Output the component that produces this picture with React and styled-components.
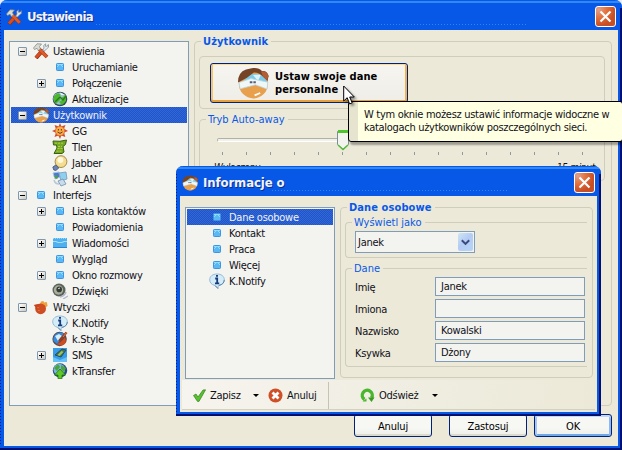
import React from 'react';
import styled, { createGlobalStyle, css } from 'styled-components';

const Global = createGlobalStyle`
  *, *::before, *::after { box-sizing: border-box; }
  body { margin: 0; overflow: hidden; font: 11px/16px "DejaVu Sans Condensed", "DejaVu Sans", sans-serif; letter-spacing: -0.27px; color: #101018; }
  svg { display: block; flex: none; }
`;

const line = '#cfcebd';
const steel = '#7f9db9';
const royal = '#0858e8';
const face = '#ece9d8';

const Desktop = styled.main`
  position: relative;
  width: 622px;
  height: 450px;
  overflow: hidden;
  background: #e8edf8;
`;

const Window = styled.section`
  display: flex;
  flex-direction: column;
  width: 622px;
  height: 450px;
  border: solid ${royal};
  border-width: 0 4px 4px;
  border-radius: 7px 7px 0 0;
  background: ${face};
  position: relative;
  &::after {
    content: '';
    position: absolute;
    inset: 8px -4px -4px -4px;
    border: solid #001070;
    border-width: 0 2px 2px 0;
    pointer-events: none;
  }
  &::before {
    content: '';
    position: absolute;
    inset: 8px auto 0 -4px;
    width: 1px;
    background: repeating-linear-gradient(#001c86 0 1px, transparent 1px 3px);
    z-index: 1;
  }
`;

const Dialog = styled(Window)`
  position: absolute;
  left: 176px;
  top: 166px;
  width: 425px;
  height: 250px;
`;

const TitleBar = styled.header`
  display: flex;
  align-items: center;
  height: 30px;
  margin: 0 -4px;
  padding: 3px 6px 0 6px;
  flex: none;
  background:
    repeating-linear-gradient(90deg, #2f82f8 0 1px, transparent 1px 3px) 96px 24px / calc(100% - 190px) 1px no-repeat,
    linear-gradient(#0858e8 0 1px, #2f8af8 1px 3px, #0858e8 3px);
  border-radius: 7px 7px 0 0;
`;

const Title = styled.h1`
  flex: 1;
  margin: 0 0 0 5px;
  font-size: 13px;
  line-height: 18px;
  letter-spacing: ${(p) => p.$track || '-0.7px'};
  color: #f2f4fb;
  text-shadow: 1px 1px #0a2f95;
`;

const CloseButton = styled.button`
  display: grid;
  place-items: center;
  width: 21px;
  height: 21px;
  padding: 0;
  border: 1px solid #fff;
  border-radius: 3px;
  background: radial-gradient(circle at 15% 15%, #e0a08c, #e2703c 35%, #c84e24 70%);
`;

const Content = styled.div`
  display: flex;
  gap: 5px;
  padding: 11px 6px 0 5px;
  height: 376px;
`;

const Tree = styled.ul`
  list-style: none;
  margin: 0;
  padding: 1px;
  width: 180px;
  height: 365px;
  flex: none;
  border: 1px solid ${steel};
  background: #f3f3ef;
`;

const DialogTree = styled(Tree)`
  width: 150px;
  height: 172px;
`;

const TreeRow = styled.li`
  display: flex;
  align-items: center;
  height: 16px;
  padding-left: ${(p) => p.$indent}px;
  ${(p) => p.$selected && css`
    color: #f2f2f2;
    background: repeating-conic-gradient(#1556dc 0 25%, #3c66c4 0 50%) 0 0 / 2px 2px;
  `}
`;

const RowLabel = styled.span`
  padding-top: 2px;
`;

const Toggle = styled.span`
  display: grid;
  width: 9px;
  height: 9px;
  margin-right: 6px;
  flex: none;
  border: 1px solid #7f98af;
  border-radius: 1px;
  background:
    linear-gradient(#000, #000) center / 5px 1px no-repeat,
    ${(p) => !p.$open && 'linear-gradient(#000, #000) center / 1px 5px no-repeat,'}
    linear-gradient(135deg, #fff, #cfc9bc);
  visibility: ${(p) => (p.$hidden ? 'hidden' : 'visible')};
`;

const RowIcon = styled.span`
  display: flex;
  width: 16px;
  height: 16px;
  margin-right: 4px;
  flex: none;
`;

const GroupBox = styled.section`
  border: 1px solid ${line};
  border-radius: 4px;
  height: ${(p) => p.$h}px;
  padding: ${(p) => p.$pad || '0'};
  margin-top: ${(p) => p.$mt || 0}px;
  flex: ${(p) => (p.$grow ? '1' : 'none')};
  ${(p) => p.$open && css`
    border-right: 0;
    border-radius: 4px 0 0 4px;
  `}
`;

const Legend = styled.h2`
  width: fit-content;
  height: 16px;
  margin: -8px 0 -1px ${(p) => p.$x || 6}px;
  padding: 0 3px 0 2px;
  font-size: 11px;
  line-height: 16px;
  font-weight: ${(p) => (p.$bold ? 700 : 400)};
  letter-spacing: ${(p) => (p.$bold ? '0.1px' : '0')};
  color: ${royal};
  background: ${face};
`;

const PersonalButton = styled.button`
  display: flex;
  align-items: center;
  gap: 6px;
  width: 198px;
  height: 40px;
  padding: 0 0 0 26px;
  border: 1px solid #00237a;
  border-radius: 3px;
  background: linear-gradient(#f6f5f1, #efede6);
  box-shadow: inset 0 1px #fbdc98, inset 0 -2px #e8a038, inset 2px 0 #f7c56c, inset -2px 0 #f0b350;
  font: 700 11px/13px "DejaVu Sans Condensed", sans-serif;
  letter-spacing: 0.1px;
  text-align: left;
`;

const Track = styled.div`
  display: flex;
  align-items: center;
  height: 4px;
  margin: 11px 9px 0 17px;
  border: 1px solid #aeb3a8;
  border-bottom-color: #fff;
  border-radius: 2px;
  background: #f3f1e7;
`;

const Thumb = styled.span`
  margin-left: 119px;
`;

const Ticks = styled.div`
  display: flex;
  justify-content: space-between;
  width: 361px;
  margin: 10px 0 0 22px;
`;

const Tick = styled.i`
  width: 1px;
  height: 3px;
  background: #8c9c9c;
`;

const RangeLabels = styled.div`
  display: flex;
  justify-content: space-between;
  margin: 5px 9px 0 14px;
  font-size: 10px;
  font-style: italic;
`;

const Actions = styled.footer`
  display: flex;
  justify-content: flex-end;
  padding: 8px 6px 0 0;
`;

const ActionButton = styled.button`
  width: 78px;
  height: 23px;
  padding: 2px 0 0;
  margin-left: ${(p) => p.$gap}px;
  border: 1px solid #00237a;
  border-radius: 3px;
  background: linear-gradient(#f7f7f4 60%, #eeeee8);
  box-shadow: ${(p) => (p.$primary ? 'inset 0 2px #c4d6f6, inset 2px 0 #a9c6f2, inset -2px 0 #8fb8ee, inset 0 -2px #6fa8ea' : 'inset 0 -2px #dcdace')};
  font: inherit;
  letter-spacing: -0.15px;
`;

const DialogBody = styled.div`
  display: flex;
  gap: 5px;
  padding: 11px 4px 0 5px;
  height: 184px;
`;

const SelectBox = styled.div`
  display: flex;
  align-items: center;
  justify-content: space-between;
  width: 120px;
  height: 22px;
  margin: 1px 0 0 9px;
  padding: 0 1px 0 2px;
  border: 1px solid ${steel};
  background: #f3f3ef;
`;

const SelectArrow = styled.span`
  display: grid;
  place-items: center;
  width: 15px;
  height: 18px;
  border-radius: 2px;
  background: linear-gradient(135deg, #cfe6f4, #b4ccf4 45%, #b4d4fa);
`;

const Fields = styled.div`
  display: grid;
  grid-template-columns: 80px 150px;
  gap: 3px 0;
  align-items: center;
  margin: 1px 0 0 9px;
`;

const Field = styled.output`
  height: 19px;
  padding: 1px 5px;
  border: 1px solid ${steel};
  background: #f3f3ef;
`;

const ToolBar = styled.nav`
  display: flex;
  align-items: center;
  height: 30px;
  margin: 0 2px;
  padding: 0 11px;
  background: linear-gradient(105deg, #f6f4ee, #efede0 60%, #ece9d8);
  box-shadow: inset 0 -1px #d4d1c2;
`;

const Tool = styled.span`
  display: flex;
  align-items: center;
  gap: 4px;
  width: ${(p) => p.$w}px;
`;

const Caret = styled.i`
  width: 0;
  height: 0;
  border: solid transparent;
  border-width: 3px 3px 0;
  border-top-color: #000;
`;

const Divider = styled.i`
  width: 1px;
  height: 27px;
  margin-right: 31px;
  background: #c5c3b4;
`;

const Tooltip = styled.aside`
  position: absolute;
  left: 348px;
  top: 101px;
  width: 275px;
  height: 41px;
  padding: 6px 0 0 15px;
  border: 1px solid #000;
  border-radius: 3px;
  background: linear-gradient(90deg, #e6e3cf 9px, #ffffe1 9px);
  box-shadow: 2px 3px 2px #0005;
  line-height: 13px;
  letter-spacing: -0.3px;
  white-space: nowrap;
`;

const Pointer = styled.svg`
  position: absolute;
  left: 343px;
  top: 85px;
  filter: drop-shadow(2px 2px 1px #0006);
`;

const Svg = ({ s = 16, children }) => (
  <svg width={s} height={s} viewBox="0 0 16 16">{children}</svg>
);

const ToolsIcon = () => (
  <Svg>
    <path d="M3 15 10 7" stroke="#8e2c0c" strokeWidth="4" />
    <path d="M3 14.5 10 7" stroke="#d84e20" strokeWidth="3" />
    <path d="M6 6 14 14" stroke="#9c330f" strokeWidth="3.8" />
    <path d="M6.5 6.5 13.7 13.7" stroke="#e25a28" strokeWidth="2.8" />
    <path d="M.5 5 4 .8 8.5 1 6.5 3.5 7.5 6 5.5 7.5 4 5.3 1.5 6.5z" fill="#d9dcd4" stroke="#7d8378" strokeWidth=".7" />
    <path d="M9.5 7.5 11 5 10.7 2.5 12.6.8 12.5 3.3 14.6 3 15.3 1.5 15.6 4.2 13.6 5.8 11.5 8z" fill="#e4ebee" stroke="#75828c" strokeWidth=".7" />
  </Svg>
);
const BoxIcon = () => (
  <Svg>
    <rect x="4.5" y="4.5" width="7" height="7" rx=".8" fill="#5cb8f4" stroke="#3c94e4" />
    <path d="M5 5.5h6M5 7.5h1m4 0h1M6 6.5h1m2 0h1" stroke="#8cdcfc" />
  </Svg>
);
const GlobeIcon = () => (
  <Svg>
    <circle cx="8" cy="8" r="7.3" fill="#2c4a54" />
    <circle cx="7.6" cy="7.6" r="6.2" fill="#9cc4d4" />
    <path d="M2 5 6 2 9 4 7 6 9 8 6 11 4 13 1.5 9zM9 7 14 4v6l-4 4-3-3 3-2z" fill="#4cb82c" />
    <path d="M3 11 8 6l3 3 3-4" fill="none" stroke="#2a7c18" strokeWidth="1.3" />
    <path d="M8 1.5 13 4 9 4z" fill="#e8f2f6" />
  </Svg>
);
const PersonIcon = ({ s = 16 }) => (
  <Svg s={s}>
    <circle cx="8.2" cy="8.4" r="7.3" fill="#e9a04c" />
    <path d="M3 8Q5 3.2 10 3.4 14.6 4.5 15.2 8z" fill="#7ccbe8" />
    <path d="M8 4 12 3.8 10.5 7z" fill="#dff3fa" />
    <path d="M1 7.8 7 5.8 15.4 7.6 15 11 9.2 8.9 1.6 10.9z" fill="#f1f6f6" stroke="#b7dbe6" strokeWidth=".4" />
    <path d="M.5 7.8Q.4 2.6 4.5 1.2L8 .5Q11 .2 12.5 2 15 1.6 15.8 4.4L15.3 7 13.4 5.2Q11 2.6 8.4 2.8L5 5.4z" fill="#754427" />
    <path d="M12 2.2Q15 1.8 15.7 4.6L15 6.6 13 4.8z" fill="#b45c34" />
    <path d="M6.4 7.6h1.3m.5 0h1.2" stroke="#565c7c" strokeWidth="1" />
    <path d="M8.8 14.2 11.6 13" stroke="#fff" strokeWidth=".9" />
  </Svg>
);
const SunIcon = () => (
  <Svg>
    <path d="m8 0 1.4 3.5L13.5 2 12 5.8 16 8l-4 1.6 1.3 4.4-4-1.6L8 16l-1.6-3.6L2.5 14 4 9.7 0 8l4-1.8L2.6 2l4 1.6z" fill="#cf4932" />
    <circle cx="8" cy="8" r="4.7" fill="#f8ac48" stroke="#d46a2c" strokeWidth=".6" />
    <path d="M6.4 6v1.5m3-1.5v1.5M5.5 9Q8 11.8 10.5 9" fill="none" stroke="#5b2810" strokeWidth=".9" />
  </Svg>
);
const TlenIcon = () => (
  <Svg>
    <path d="M1 2Q8 3 14.5 1L13.5 5.5 11 7.5 12 13 10 14.5H2L5 9 4.5 6H1.5z" fill="#72a825" stroke="#3c5f12" />
    <path d="M3 4.2h9M6 7.5h4M5.5 9.5h5M4.5 12.2h5" stroke="#b4cf3a" strokeDasharray="2 1" />
  </Svg>
);
const BulbIcon = () => (
  <Svg>
    <circle cx="9" cy="6.6" r="5.9" fill="#f4dc91" stroke="#a88c44" />
    <circle cx="8.4" cy="5" r="3" fill="#fff8da" />
    <path d="m.8 12 3-2 3 3-3 2.5-2-.5z" fill="#6a86b4" stroke="#32435f" strokeWidth=".7" />
  </Svg>
);
const LanIcon = () => (
  <Svg>
    <path d="M1 2 7 1l1 5-5 2z" fill="#4a79d6" stroke="#aac0e8" />
    <path d="M2 5 5 4l1 3-2 1z" fill="#4fa04a" />
    <path d="m7 2 7-1 1 7-6 2z" fill="#8ed0ee" stroke="#7898b8" strokeWidth=".8" />
    <path d="m6 10 5-2 3 5-5 2z" fill="#c9dceb" stroke="#6e8fae" strokeWidth=".8" />
    <path d="M2 9q1 4 5 4" fill="none" stroke="#b9c7d5" strokeWidth="1.5" />
  </Svg>
);
const MailIcon = () => (
  <Svg>
    <rect x="1" y="3" width="14" height="10" fill="#50b0ee" />
    <path d="M1 3.5h14" stroke="#90dafb" strokeDasharray="1 1" />
    <path d="M1 6.5h3l2 1h4l2-1h3" fill="none" stroke="#a4e0fa" strokeWidth="1.2" />
    <path d="M1 12.5h14" stroke="#2b83d4" />
  </Svg>
);
const SoundIcon = () => (
  <Svg>
    <circle cx="7" cy="7" r="6.5" fill="#5b635b" />
    <circle cx="6.5" cy="7" r="4.7" fill="#a8b09d" />
    <circle cx="7.2" cy="6.4" r="2.8" fill="#363d35" />
    <path d="M6.2 5.7 8 5" stroke="#e5e8da" />
    <path d="M8 14q5-1 6-5m-3 7 5-3" fill="none" stroke="#b4b9c8" strokeWidth="1.4" />
  </Svg>
);
const PluginIcon = () => (
  <Svg>
    <path d="M7 5 8 2.5l2.5-.6.5 1.6 2.8-.5L14.6 7 10 10z" fill="#f0a03c" />
    <circle cx="7.6" cy="9.8" r="5.4" fill="#ce4d22" />
    <path d="M.8 6 3.5 5.2 7 5 3.5 11Q2.6 7.6.8 6z" fill="#c9441d" />
    <path d="M4.5 8.5h1m0 3h1" stroke="#f28a58" />
  </Svg>
);
const InfoIcon = () => (
  <Svg>
    <path d="M8 1C3.5 1 .7 3.4.7 6.8c0 2.8 2 4.9 5 5.6L9 15.5l.3-3c3.7-.5 6-2.7 6-5.8C15.3 3.3 12.3 1 8 1z" fill="#d4ecf8" stroke="#8fb4d0" strokeWidth=".9" />
    <path d="M10 12.4q5-1 5.3-5.5M9 15.5 6 12.5" fill="none" stroke="#5b86ac" />
    <path d="M7 2.8h2M6.2 5.5h2v4.6M6 10.3h4.2" fill="none" stroke="#173a7a" strokeWidth="1.8" />
  </Svg>
);
const StyleIcon = () => (
  <Svg>
    <circle cx="7.6" cy="8" r="7.2" fill="#5c4a4c" />
    <path d="M1.4 10Q1 2.5 8 1.6q4 0 5 3L5 13z" fill="#338be2" />
    <path d="M3 5 7 3l3 2-4 5z" fill="#d4effb" />
    <path d="M4 13q5-1 9-7 3 7-4 8.5z" fill="#d34c20" />
    <path d="M7 10 14.5 1.5" stroke="#963d20" strokeWidth="2.3" />
    <path d="M11 6 15 1" stroke="#e37a4c" />
  </Svg>
);
const SmsIcon = () => (
  <Svg>
    <rect x="1" y="1" width="14" height="14" fill="#379be8" />
    <path d="m1 10 7 3 7-3v5H1z" fill="#65c3f7" />
    <path d="m3 8 7-6 4 1-5 7z" fill="#4b7543" stroke="#234e65" />
    <path d="m5.5 8 4-4 2 1-4 4z" fill="#9cc46c" />
  </Svg>
);
const TransferIcon = () => (
  <Svg>
    <circle cx="8" cy="7.5" r="7.2" fill="#264c80" />
    <circle cx="7.3" cy="6.5" r="5.8" fill="#7bb4e4" />
    <path d="M2 5 6 1l2 3-3 4zM9 2l5 3-2 4-3-3z" fill="#4aa53a" />
    <path d="m8 6 5.5 6H10v3.7H6V12H2.5z" fill="#5ecb24" stroke="#277510" strokeWidth=".8" />
  </Svg>
);

const icons = {
  tools: ToolsIcon, box: BoxIcon, globe: GlobeIcon, person: PersonIcon, sun: SunIcon, tlen: TlenIcon,
  bulb: BulbIcon, lan: LanIcon, mail: MailIcon, sound: SoundIcon, plugin: PluginIcon, info: InfoIcon,
  style: StyleIcon, sms: SmsIcon, transfer: TransferIcon,
};

const settings = [
  ['Ustawienia', 'tools', 0, 'open'],
  ['Uruchamianie', 'box', 1],
  ['Połączenie', 'box', 1, 'closed'],
  ['Aktualizacje', 'globe', 1],
  ['Użytkownik', 'person', 0, 'open', true],
  ['GG', 'sun', 1],
  ['Tlen', 'tlen', 1],
  ['Jabber', 'bulb', 1],
  ['kLAN', 'lan', 1],
  ['Interfejs', 'box', 0, 'open'],
  ['Lista kontaktów', 'box', 1, 'closed'],
  ['Powiadomienia', 'box', 1],
  ['Wiadomości', 'mail', 1, 'closed'],
  ['Wygląd', 'box', 1],
  ['Okno rozmowy', 'box', 1, 'closed'],
  ['Dźwięki', 'sound', 1],
  ['Wtyczki', 'plugin', 0, 'open'],
  ['K.Notify', 'info', 1],
  ['k.Style', 'style', 1],
  ['SMS', 'sms', 1, 'closed'],
  ['kTransfer', 'transfer', 1],
];

const sections = [
  ['Dane osobowe', 'box', true], ['Kontakt', 'box'], ['Praca', 'box'], ['Więcej', 'box'], ['K.Notify', 'info'],
];

const person = [['Imię', 'Janek'], ['Imiona', ''], ['Nazwisko', 'Kowalski'], ['Ksywka', 'Dżony']];

const Close = () => (
  <CloseButton aria-label="Zamknij">
    <svg width="13" height="13" viewBox="0 0 13 13"><path d="m1.5 1.5 10 10m0-10-10 10" stroke="#fff" strokeWidth="2.2" /></svg>
  </CloseButton>
);

export default function App() {
  return (
    <Desktop>
      <Global />
      <Window>
        <TitleBar>
          <ToolsIcon />
          <Title>Ustawienia</Title>
          <Close />
        </TitleBar>
        <Content>
          <Tree>
            {settings.map(([name, icon, level, state, selected]) => {
              const Icon = icons[icon];
              return (
                <TreeRow key={name} $indent={level ? 26 : 7} $selected={selected}>
                  <Toggle $open={state === 'open'} $hidden={!state} />
                  <RowIcon><Icon /></RowIcon>
                  <RowLabel>{name}</RowLabel>
                </TreeRow>
              );
            })}
          </Tree>
          <GroupBox $h={365} $grow $pad="0 6px 0 4px">
            <Legend $bold $x={2}>Użytkownik</Legend>
            <GroupBox $h={53} $mt={7} $pad="6px 0 0 10px">
              <PersonalButton>
                <PersonIcon s={32} />
                <span>Ustaw swoje dane<br />personalne</span>
              </PersonalButton>
            </GroupBox>
            <GroupBox $h={62} $mt={10}>
              <Legend>Tryb Auto-away</Legend>
              <Track>
                <Thumb>
                  <svg width="12" height="21" viewBox="0 0 12 21">
                    <path d="M.5 1.5h11v13l-5.5 5-5.5-5z" fill="#f3f3ef" stroke="#7c8f96" />
                    <path d="M1 1.5h10" stroke="#4fc52c" strokeWidth="3" />
                    <path d="m1 15 5 4.5 5-4.5" fill="none" stroke="#58bd3c" strokeWidth="1.6" />
                  </svg>
                </Thumb>
              </Track>
              <Ticks>{Array.from({ length: 16 }, (_, i) => <Tick key={i} />)}</Ticks>
              <RangeLabels><span>Wyłączony</span><span>15 minut</span></RangeLabels>
            </GroupBox>
          </GroupBox>
        </Content>
        <Actions>
          <ActionButton>Anuluj</ActionButton>
          <ActionButton $gap={17}>Zastosuj</ActionButton>
          <ActionButton $gap={7} $primary>OK</ActionButton>
        </Actions>
      </Window>

      <Dialog>
        <TitleBar>
          <PersonIcon />
          <Title $track="-0.1px">Informacje o</Title>
          <Close />
        </TitleBar>
        <DialogBody>
          <DialogTree>
            {sections.map(([name, icon, selected]) => {
              const Icon = icons[icon];
              return (
                <TreeRow key={name} $indent={22} $selected={selected}>
                  <RowIcon><Icon /></RowIcon>
                  <RowLabel>{name}</RowLabel>
                </TreeRow>
              );
            })}
          </DialogTree>
          <GroupBox $h={171} $grow $pad="0 5px 0 4px">
            <Legend $bold $x={2}>Dane osobowe</Legend>
            <GroupBox $open $h={36} $mt={7}>
              <Legend>Wyświetl jako</Legend>
              <SelectBox>
                <RowLabel>Janek</RowLabel>
                <SelectArrow>
                  <svg width="9" height="7" viewBox="0 0 9 7"><path d="m.8 1.2 3.7 3.7 3.7-3.7" fill="none" stroke="#3b4a7c" strokeWidth="2" /></svg>
                </SelectArrow>
              </SelectBox>
            </GroupBox>
            <GroupBox $open $h={99} $mt={10}>
              <Legend>Dane</Legend>
              <Fields>
                {person.map(([label, value]) => (
                  <React.Fragment key={label}>
                    <RowLabel>{label}</RowLabel>
                    <Field>{value}</Field>
                  </React.Fragment>
                ))}
              </Fields>
            </GroupBox>
          </GroupBox>
        </DialogBody>
        <ToolBar>
          <Tool $w={60}>
            <svg width="13" height="13" viewBox="0 0 13 13">
              <path d="M.5 6.5 3 5l2 3L10 1l2.6-.2L6 12.4H4.5z" fill="#55c32c" stroke="#3c7d24" strokeWidth=".7" />
            </svg>
            <RowLabel>Zapisz</RowLabel>
          </Tool>
          <Tool $w={15}><Caret /></Tool>
          <Tool $w={60}>
            <svg width="15" height="15" viewBox="0 0 15 15">
              <circle cx="7.5" cy="7.5" r="7" fill="#cf4f26" />
              <path d="m4.5 4.5 6 6m0-6-6 6" stroke="#fff" strokeWidth="2.8" />
            </svg>
            <RowLabel>Anuluj</RowLabel>
          </Tool>
          <Divider />
          <Tool $w={72}>
            <svg width="15" height="15" viewBox="0 0 15 15">
              <path d="M4.5 11.5A5 5 0 1 1 11.5 10" fill="none" stroke="#4ab62e" strokeWidth="3.4" />
              <path d="M8 9.5h6.5L11.5 14z" fill="#3a9c22" />
              <path d="M2.5 13.5h4v-3z" fill="#4ab62e" />
            </svg>
            <RowLabel>Odśwież</RowLabel>
          </Tool>
          <Caret />
        </ToolBar>
      </Dialog>

      <Tooltip>
        W tym oknie możesz ustawić informacje widoczne w<br />
        katalogach użytkowników poszczególnych sieci.
      </Tooltip>
      <Pointer width="12" height="21" viewBox="0 0 12 21">
        <path d="M.7 1v15l3.5-3.3 2.4 6.2 2.6-1L6.7 12h4.6z" fill="#fff" stroke="#000" />
      </Pointer>
    </Desktop>
  );
}
